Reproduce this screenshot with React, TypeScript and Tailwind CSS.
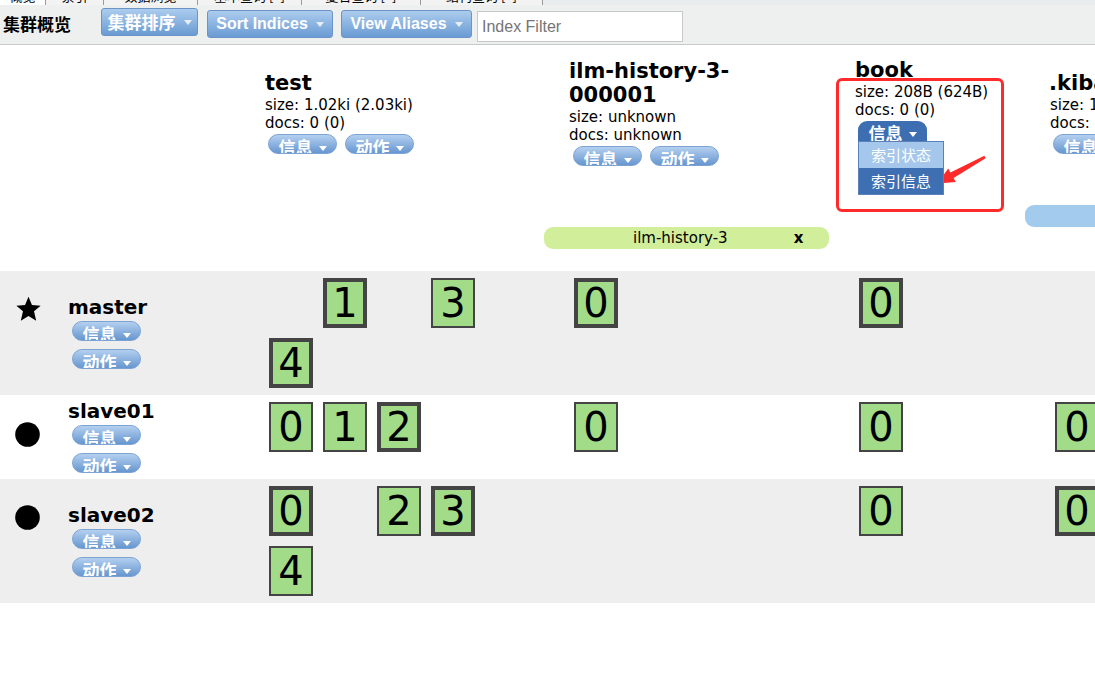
import React from 'react';

type Shard = { n: number; p: boolean } | null;

const P = (n: number): Shard => ({ n, p: true });
const R = (n: number): Shard => ({ n, p: false });

const Caret = () => (
  <span className="block h-0 w-0 border-l-[4px] border-r-[4px] border-t-[5px] border-l-transparent border-r-transparent border-t-white" />
);

const Pill = ({ label, active = false }: { label: string; active?: boolean }) => (
  <div
    className={
      active
        ? 'h-[20px] w-[69px] shrink-0 overflow-hidden rounded-t-[9px] bg-[#3d6eb1]'
        : 'h-[20px] w-[69px] shrink-0 overflow-hidden rounded-full border border-[#7ca3d3] bg-linear-to-b from-[#b4d0f0] to-[#6796cf]'
    }
  >
    <div className="flex items-start justify-center gap-[6px] pt-[2px]">
      <span className="font-['Noto_Sans_CJK_SC',sans-serif] text-[17px] font-bold leading-[20px] text-white">{label}</span>
      <span className="mt-[9px]">
        <Caret />
      </span>
    </div>
  </div>
);

const ShardBox = ({ s }: { s: Shard }) =>
  s ? (
    <div
      className={`flex h-[50px] w-[44px] items-center justify-center border-[#444444] bg-[#a3dc89] text-[40px] leading-none ${
        s.p ? 'border-4' : 'border-2'
      }`}
    >
      {s.n}
    </div>
  ) : (
    <div className="h-[50px] w-[44px]" />
  );

const cols = [
  { w: 'w-[304px]', pl: 'pl-[4px]' },
  { w: 'w-[286px]', pl: 'pl-[5px]' },
  { w: 'w-[195px]', pl: 'pl-[4px]' },
  { w: 'w-[300px]', pl: 'pl-[5px]' },
];

const nodes: { name: string; star: boolean; bg: string; iconPt: string; shards: Shard[][] }[] = [
  {
    name: 'master',
    star: true,
    bg: 'bg-[#eeeeee]',
    iconPt: 'pt-[25px]',
    shards: [[null, P(1), null, R(3), P(4)], [P(0)], [P(0)], []],
  },
  {
    name: 'slave01',
    star: false,
    bg: 'bg-white',
    iconPt: 'pt-[27px]',
    shards: [[R(0), R(1), P(2)], [R(0)], [R(0)], [R(0)]],
  },
  {
    name: 'slave02',
    star: false,
    bg: 'bg-[#eeeeee]',
    iconPt: 'pt-[26px]',
    shards: [[P(0), null, R(2), P(3), R(4)], [], [R(0)], [P(0)]],
  },
];

const tabs = [
  { w: 'w-[46px]', label: '概览', bg: 'bg-white' },
  { w: 'w-[58px]', label: '索引', bg: 'bg-[#f3f3f3]' },
  { w: 'w-[94px]', label: '数据浏览', bg: 'bg-[#f3f3f3]' },
  { w: 'w-[104px]', label: '基本查询 [+]', bg: 'bg-[#f3f3f3]' },
  { w: 'w-[119px]', label: '复合查询 [+]', bg: 'bg-[#f3f3f3]' },
  { w: 'w-[122px]', label: '结构查询 [+]', bg: 'bg-[#f3f3f3]' },
];

const ToolBtn = ({ label, className }: { label: string; className: string }) => (
  <div
    className={`flex h-[28px] shrink-0 items-center justify-center gap-[8px] rounded-[3px] border border-[#6c94c6] bg-linear-to-b from-[#acccee] to-[#6a9bd3] font-bold text-white ${className}`}
  >
    <span>{label}</span>
    <span className="mt-[1px] block h-0 w-0 border-l-[4px] border-r-[4px] border-t-[5px] border-l-transparent border-r-transparent border-t-[#e8eef6]" />
  </div>
);

export default function App() {
  return (
    <div className="relative h-[692px] w-[1095px] overflow-hidden bg-white font-['DejaVu_Sans','Noto_Sans_CJK_SC',sans-serif] text-black">
      {/* tabs strip, mostly scrolled away */}
      <div className="flex h-[5px] overflow-hidden bg-[#e9ecec]">
        {tabs.map((t) => (
          <div key={t.label} className={`${t.w} ${t.bg} h-[5px] shrink-0 overflow-hidden border-r border-[#9a9a9a] text-center`}>
            <div className="-mt-[12px] font-['Noto_Sans_CJK_SC',sans-serif] text-[13px] leading-[16px]">{t.label}</div>
          </div>
        ))}
      </div>

      {/* toolbar */}
      <div className="flex h-[40px] items-start border-b border-[#c6caca] bg-[#eef0f0] pl-[3px]">
        <div className="mt-[8px] w-[98px] shrink-0 font-['Noto_Sans_CJK_SC',sans-serif] text-[17px] font-bold leading-[22px]">集群概览</div>
        <ToolBtn label="集群排序" className="mt-[3px] w-[97px] font-['Noto_Sans_CJK_SC',sans-serif] text-[17px] text-[#eef4fb]" />
        <ToolBtn label="Sort Indices" className="ml-[9px] mt-[5px] w-[126px] font-['Liberation_Sans',sans-serif] text-[16px]" />
        <ToolBtn label="View Aliases" className="ml-[8px] mt-[5px] w-[131px] font-['Liberation_Sans',sans-serif] text-[16px]" />
        <input
          placeholder="Index Filter"
          className="ml-[5px] mt-[6px] h-[31px] w-[206px] shrink-0 border border-[#c8c8c8] bg-white px-[4px] font-['Liberation_Sans',sans-serif] text-[16px] placeholder:text-[#757575] outline-none"
        />
      </div>

      {/* index headers */}
      <div className="flex h-[160px]">
        <div className="w-[265px] shrink-0" />
        <div className="w-[304px] shrink-0 pt-[26px]">
          <div className="text-[21px] font-bold leading-[24px]">test</div>
          <div className="mt-[1px] text-[15px] leading-[18px]">size: 1.02ki (2.03ki)</div>
          <div className="text-[15px] leading-[18px]">docs: 0 (0)</div>
          <div className="mt-[2px] flex gap-[8px] pl-[3px]">
            <Pill label="信息" />
            <Pill label="动作" />
          </div>
        </div>
        <div className="w-[286px] shrink-0 pt-[14px]">
          <div className="text-[21px] font-bold leading-[24px]">
            ilm-history-3-
            <br />
            000001
          </div>
          <div className="mt-[1px] text-[15px] leading-[18px]">size: unknown</div>
          <div className="text-[15px] leading-[18px]">docs: unknown</div>
          <div className="mt-[2px] flex gap-[8px] pl-[4px]">
            <Pill label="信息" />
            <Pill label="动作" />
          </div>
        </div>
        <div className="w-[195px] shrink-0 pt-[13px]">
          <div className="text-[21px] font-bold leading-[24px]">book</div>
          <div className="mt-[1px] text-[15px] leading-[18px]">size: 208B (624B)</div>
          <div className="text-[15px] leading-[18px]">docs: 0 (0)</div>
          <div className="relative mt-[2px] ml-[3px] w-[69px]">
            <Pill label="信息" active />
            <div className="absolute left-0 top-full z-10 w-[86px] border border-[#5b82b8] font-['Noto_Sans_CJK_SC',sans-serif] text-[15px] text-white">
              <div className="h-[26px] bg-[#a5c7ec] pl-[12px] leading-[26px]">索引状态</div>
              <div className="h-[26px] bg-[#3e6fb2] pl-[12px] leading-[26px]">索引信息</div>
            </div>
          </div>
        </div>
        <div className="w-[300px] shrink-0 whitespace-nowrap pl-[-1px] pt-[26px]">
          <div className="-ml-[1px] text-[21px] font-bold leading-[24px]">.kibana_1</div>
          <div className="mt-[1px] text-[15px] leading-[18px]">size: 10.9ki (21.8ki)</div>
          <div className="text-[15px] leading-[18px]">docs: 3 (6)</div>
          <div className="mt-[2px] flex gap-[8px] pl-[3px]">
            <Pill label="信息" />
            <Pill label="动作" />
          </div>
        </div>
      </div>

      {/* aliases */}
      <div className="flex h-[22px]">
        <div className="ml-[1025px] h-[22px] w-[200px] shrink-0 rounded-l-[9px] bg-[#a3cbee]" />
      </div>
      <div className="flex h-[22px]">
        <div className="ml-[544px] flex h-[22px] w-[285px] shrink-0 items-center rounded-[9px] bg-[#d1ee9b] text-[15px]">
          <span className="ml-[89px]">ilm-history-3</span>
          <span className="ml-[66px] font-bold">x</span>
        </div>
      </div>
      <div className="h-[22px]" />

      {/* node rows */}
      {nodes.map((node) => (
        <div key={node.name} className={`flex ${node.bg}`}>
          <div className="flex w-[265px] shrink-0">
            <div className={`w-[68px] shrink-0 pl-[15px] ${node.iconPt}`}>
              {node.star ? (
                <svg width="27" height="26" viewBox="0 0 24 24">
                  <polygon
                    points="12,0.8 15.2,8.4 23.2,8.9 17.1,14.1 19.1,22.9 12,18.4 4.9,22.9 6.9,14.1 0.8,8.9 8.8,8.4"
                    fill="#000"
                  />
                </svg>
              ) : (
                <svg width="25" height="25" viewBox="0 0 25 25">
                  <circle cx="12.5" cy="12.5" r="12.3" fill="#000" />
                </svg>
              )}
            </div>
            <div className="flex flex-col justify-center pb-[6px] pt-[7px]">
              <div className="text-[20px] font-bold leading-[18px]">{node.name}</div>
              <div className="ml-[4px] mt-[5px]">
                <Pill label="信息" />
              </div>
              <div className="ml-[4px] mt-[8px]">
                <Pill label="动作" />
              </div>
            </div>
          </div>
          {cols.map((c, i) => (
            <div key={i} className={`${c.w} ${c.pl} shrink-0`}>
              <div className="flex w-[216px] flex-wrap gap-[10px] pb-[7px] pt-[7px]">
                {node.shards[i].map((s, j) => (
                  <ShardBox key={j} s={s} />
                ))}
              </div>
            </div>
          ))}
        </div>
      ))}

      {/* annotation overlay */}
      <div className="pointer-events-none absolute left-[836px] top-[78px] h-[134px] w-[168px] rounded-[6px] border-[3px] border-[#ff2a2a]" />
      <svg className="pointer-events-none absolute left-0 top-0" width="1095" height="692">
        <polygon
          points="985.6,158.2 953.6,178 955.8,182 937.5,183.5 948.2,168.6 950.4,172.6 984.4,155.8"
          fill="#ff2a2a"
        />
      </svg>
    </div>
  );
}
